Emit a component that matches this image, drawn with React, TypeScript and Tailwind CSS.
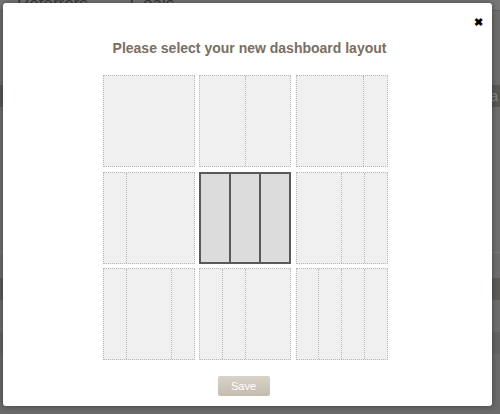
import React from "react";

type Layout = { cols: number[]; selected?: boolean };

const layouts: Layout[] = [
  { cols: [1] },
  { cols: [1, 1] },
  { cols: [3, 1] },
  { cols: [1, 3] },
  { cols: [1, 1, 1], selected: true },
  { cols: [2, 1, 1] },
  { cols: [1, 2, 1] },
  { cols: [1, 1, 2] },
  { cols: [1, 1, 1, 1] },
];

const LayoutTile = ({ cols, selected }: Layout) => {
  return (
    <div
      className={`flex w-[92px] h-[92px] cursor-pointer ${
        selected
          ? "border-2 border-[#5a5a5a] bg-[#dcdcdc]"
          : "border border-dotted border-[#b8b8b8] bg-[#f0f0f0]"
      }`}
    >
      {cols.map((c, i) => (
        <div
          key={i}
          style={{ flexGrow: c, flexBasis: 0 }}
          className={
            i === 0
              ? ""
              : selected
              ? "border-l-2 border-[#5a5a5a]"
              : "border-l border-dotted border-[#b8b8b8]"
          }
        />
      ))}
    </div>
  );
};

export default function App() {
  return (
    <div className="relative w-[500px] h-[414px] overflow-hidden bg-[#6d6d6d] font-['Liberation_Sans',Arial,sans-serif]">
      {/* dimmed page behind the modal */}
      <div className="flex flex-col">
        <div className="flex h-[10px] items-end bg-[#767676] text-[17px] leading-none text-[#3a3a3a]">
          <span className="ml-[17px] -mb-[2px]">Referrers</span>
          <span className="ml-[42px] -mb-[2px]">Goals</span>
        </div>
        <div className="h-[75px] border-t border-[#5f5f5f]" />
        <div className="h-[22px] bg-[#5a5853] flex justify-end pr-[2px] text-[14px] text-[#8a8a8a] leading-[22px]">
          Ta
        </div>
        <div className="h-[145px] bg-[#6e6e6e]" />
        <div className="h-[26px] border-t border-[#7a7a7a]" />
        <div className="h-[22px] bg-[#5d5b57]" />
        <div className="h-[32px]" />
        <div className="h-[22px] bg-[#646464]" />
        <div className="h-[60px] bg-[#6a6a6a]" />
      </div>

      {/* modal */}
      <div className="absolute left-[3px] top-[3px] w-[489px] h-[403px] rounded-[3px] bg-white shadow-[0_0_6px_rgba(0,0,0,0.4)] flex flex-col items-center">
        <button className="absolute right-[9px] top-[14px] text-[11px] leading-none text-black font-bold">
          ✖
        </button>
        <h2 className="mt-[36px] ml-[4px] text-[14px] font-bold text-[#7a6e62] leading-[18px]">
          Please select your new dashboard layout
        </h2>
        <div className="mt-[18px] -ml-[5px] grid grid-cols-[92px_92px_92px] gap-x-[4.5px] gap-y-[4.5px]">
          {layouts.map((l, i) => (
            <LayoutTile key={i} cols={l.cols} selected={l.selected} />
          ))}
        </div>
        <button className="mt-[16px] -ml-[8px] w-[52px] h-[20px] rounded-[2px] bg-gradient-to-b from-[#d8d2c8] to-[#c4bcaf] text-white text-[11px] leading-[20px]">
          Save
        </button>
      </div>
    </div>
  );
}
